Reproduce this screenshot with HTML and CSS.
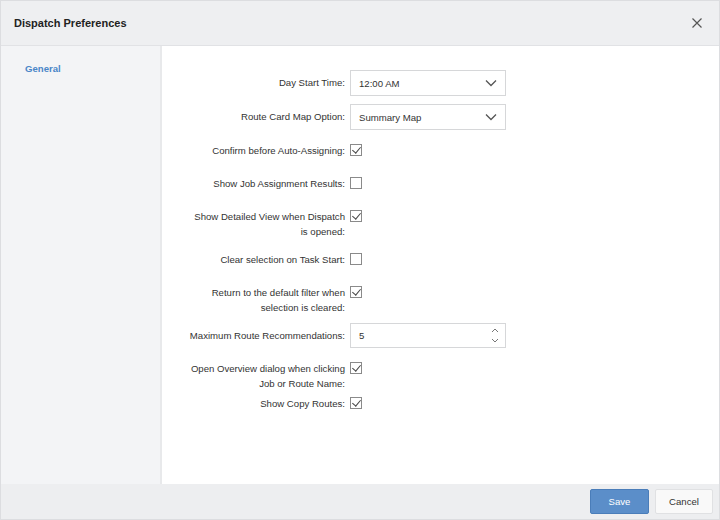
FILE: index.html
```html
<!DOCTYPE html>
<html>
<head>
<meta charset="UTF-8">
<title>Dispatch Preferences</title>
<link rel="stylesheet" href="styles.css">
</head>
<body>
<div class="dialog">
  <div class="header">
    <h2>Dispatch Preferences</h2>
    <button class="close" title="Close">
      <svg width="10" height="10" viewBox="0 0 10 10"><path d="M0.5 0.5 L9.5 9.5 M9.5 0.5 L0.5 9.5" stroke="#555" stroke-width="1.2" fill="none"/></svg>
    </button>
  </div>

  <div class="body">
    <div class="sidebar">
      <a class="tab active">General</a>
    </div>

    <div class="content">
      <div class="row">
        <label class="lbl">Day Start Time:</label>
        <div class="select">12:00 AM
          <svg width="12" height="8" viewBox="0 0 12 8"><path d="M1 1.5 L6 6.5 L11 1.5" stroke="#555" stroke-width="1.3" fill="none"/></svg>
        </div>
      </div>
      <div class="row">
        <label class="lbl">Route Card Map Option:</label>
        <div class="select">Summary Map
          <svg width="12" height="8" viewBox="0 0 12 8"><path d="M1 1.5 L6 6.5 L11 1.5" stroke="#555" stroke-width="1.3" fill="none"/></svg>
        </div>
      </div>
      <div class="row">
        <label class="lbl">Confirm before Auto-Assigning:</label>
        <span class="check on"></span>
      </div>
      <div class="row">
        <label class="lbl">Show Job Assignment Results:</label>
        <span class="check"></span>
      </div>
      <div class="row">
        <label class="lbl">Show Detailed View when Dispatch is opened:</label>
        <span class="check on"></span>
      </div>
      <div class="row">
        <label class="lbl">Clear selection on Task Start:</label>
        <span class="check"></span>
      </div>
      <div class="row">
        <label class="lbl">Return to the default filter when selection is cleared:</label>
        <span class="check on"></span>
      </div>
      <div class="row">
        <label class="lbl">Maximum Route Recommendations:</label>
        <div class="select number">5
          <span class="spin">
            <svg width="8" height="5" viewBox="0 0 8 5"><path d="M1 4 L4 1 L7 4" stroke="#777" stroke-width="1" fill="none"/></svg>
            <svg width="8" height="5" viewBox="0 0 8 5"><path d="M1 1 L4 4 L7 1" stroke="#777" stroke-width="1" fill="none"/></svg>
          </span>
        </div>
      </div>
      <div class="row tight">
        <label class="lbl">Open Overview dialog when clicking Job or Route Name:</label>
        <span class="check on"></span>
      </div>
      <div class="row">
        <label class="lbl">Show Copy Routes:</label>
        <span class="check on"></span>
      </div>
    </div>
  </div>

  <div class="footer">
    <button class="btn primary">Save</button>
    <button class="btn">Cancel</button>
  </div>
</div>
</body>
</html>
```
FILE: styles.css
```css
* {
  box-sizing: border-box;
}
html, body {
  margin: 0;
  height: 100%;
}
body {
  font-family: "Liberation Sans", Arial, sans-serif;
  font-size: 9.6px;
  color: #333;
  background: #ffffff;
}
.dialog {
  width: 720px;
  height: 520px;
  border: 1px solid #dcdde0;
  display: flex;
  flex-direction: column;
}
.header {
  height: 45px;
  background: #eeeff1;
  border-bottom: 1px solid #e1e2e5;
  display: flex;
  align-items: center;
  justify-content: space-between;
  padding: 0 17px 0 13px;
}
.header h2 {
  margin: 0;
  font-size: 11px;
  font-weight: bold;
  color: #222;
}
.close {
  border: none;
  background: none;
  padding: 0;
  width: 10px;
  height: 10px;
  cursor: pointer;
  display: flex;
}
.body {
  flex: 1;
  display: flex;
  min-height: 0;
}
.sidebar {
  width: 161px;
  background: #f3f4f6;
  border-right: 2px solid #e8e9eb;
  padding: 17px 0 0 24px;
}
.tab {
  font-weight: bold;
  color: #4a86c8;
  font-size: 9.6px;
}
.content {
  flex: 1;
  padding: 24px 0 0 28px;
}
.row {
  display: flex;
  align-items: flex-start;
  gap: 5px;
  min-height: 25px;
  margin-bottom: 8px;
}
.row.tight {
  margin-bottom: 0;
}
.lbl {
  width: 156px;
  margin-left: -1px;
  flex-shrink: 0;
  text-align: right;
  line-height: 15px;
  padding-top: 5px;
}
.select {
  width: 156px;
  height: 26px;
  border: 1px solid #d6d7d9;
  background: #fff;
  display: flex;
  align-items: center;
  justify-content: space-between;
  padding: 0 8px 0 8px;
  font-size: 9.6px;
}
.select.number {
  height: 25px;
  padding-right: 6px;
}
.spin {
  display: flex;
  flex-direction: column;
  gap: 5px;
}
.check {
  width: 12px;
  height: 12px;
  border: 1px solid #8a8a8a;
  background: #fff;
  margin-top: 6px;
  position: relative;
}
.check.on::after {
  content: "";
  position: absolute;
  left: 3px;
  top: 0px;
  width: 4px;
  height: 7px;
  border: solid #444;
  border-width: 0 1.3px 1.3px 0;
  transform: rotate(40deg);
}
.footer {
  height: 35px;
  background: #edeef0;
  display: flex;
  justify-content: flex-end;
  align-items: center;
  gap: 6px;
  padding: 0 6px 0 0;
}
.btn {
  font-family: "Liberation Sans", Arial, sans-serif;
  font-size: 9.6px;
  height: 25px;
  width: 58px;
  border: 1px solid #e0e1e3;
  background: #f9f9f9;
  color: #333;
  border-radius: 2px;
  cursor: pointer;
}
.btn.primary {
  width: 59px;
  background: #5b8ec9;
  border-color: #4a7db9;
  color: #fff;
}
```
